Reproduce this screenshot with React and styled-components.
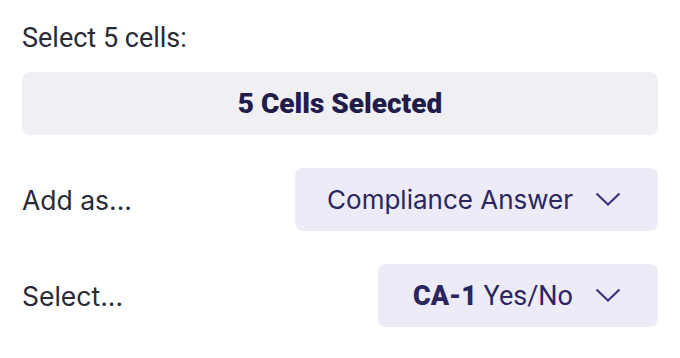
import React from "react";
import styled, { createGlobalStyle } from "styled-components";

const Global = createGlobalStyle`
  html, body { margin: 0; padding: 0; background: #ffffff; }
  body { font-family: Inter, "Noto Sans", sans-serif; }
`;

const Panel = styled.div`
  width: 680px;
  height: 358px;
  box-sizing: border-box;
  padding: 22px 22px 0 22px;
  display: flex;
  flex-direction: column;
`;

const Heading = styled.div`
  font-family: Roboto, "Liberation Sans", sans-serif;
  font-size: 27px;
  line-height: 32px;
  color: #2a2a36;
`;

const SelectedBox = styled.div`
  margin-top: 18px;
  height: 63px;
  border-radius: 8px;
  background: #f0f0f4;
  display: flex;
  align-items: center;
  justify-content: center;
  font-family: Roboto, "Liberation Sans", sans-serif;
  font-weight: 900;
  font-size: 28px;
  color: #221c4a;
`;

const Row = styled.div`
  margin-top: ${(p) => p.$top}px;
  display: flex;
  align-items: center;
  justify-content: space-between;
  height: 63px;
`;

const Label = styled.div`
  font-family: Inter, "Noto Sans", sans-serif;
  font-size: 26.5px;
  color: #2a2a36;
`;

const Dropdown = styled.button`
  height: 63px;
  width: ${(p) => p.$width}px;
  box-sizing: border-box;
  border: none;
  border-radius: 8px;
  background: #edebf7;
  display: flex;
  align-items: center;
  justify-content: flex-end;
  padding: 0 37px 0 0;
  gap: 22px;
  font-family: ${(p) => (p.$roboto ? 'Roboto, "Liberation Sans", sans-serif' : 'Inter, "Noto Sans", sans-serif')};
  font-size: ${(p) => (p.$roboto ? 27 : 26)}px;
  color: #2b2560;
  cursor: pointer;
`;

const Strong = styled.b`
  font-family: Roboto, "Liberation Sans", sans-serif;
  font-weight: 900;
`;

const Chevron = () => (
  <svg width="26" height="15" viewBox="0 0 26 15" fill="none">
    <path d="M1.5 1.5 L13 12.5 L24.5 1.5" stroke="#3b3480" strokeWidth="2.2" />
  </svg>
);

export default function App() {
  return (
    <>
      <Global />
      <Panel>
        <Heading>Select 5 cells:</Heading>
        <SelectedBox>5 Cells Selected</SelectedBox>
        <Row $top={33}>
          <Label>Add as...</Label>
          <Dropdown $width={363}>
            <span>Compliance Answer</span>
            <Chevron />
          </Dropdown>
        </Row>
        <Row $top={33}>
          <Label>Select...</Label>
          <Dropdown $width={280} $roboto>
            <span>
              <Strong>CA-1</Strong> Yes/No
            </span>
            <Chevron />
          </Dropdown>
        </Row>
      </Panel>
    </>
  );
}
